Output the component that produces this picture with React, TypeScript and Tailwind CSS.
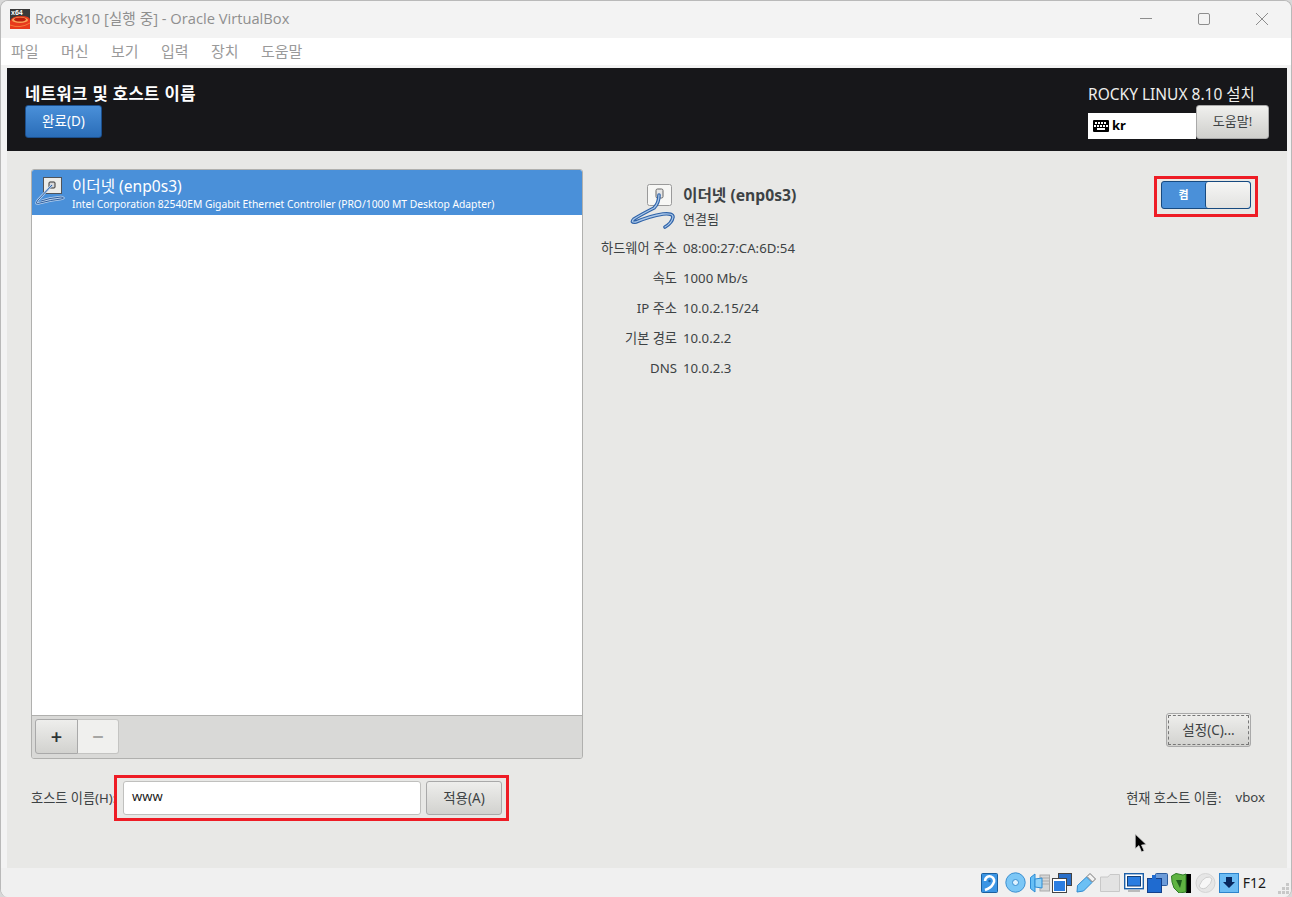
import React from "react";

const SANS = "font-['Noto_Sans','Noto_Sans_CJK_KR',sans-serif]";

function EthernetSmall() {
  const cable = "M17 8 L3 23 Q-1 28 5 26 Q16 23 26 22 Q31 21 26 20 Q14 21 6 24";
  return (
    <svg width="32" height="34" viewBox="0 0 32 34" className="shrink-0">
      <rect x="8.5" y="0.5" width="18" height="16" fill="#ecece9" stroke="#50545a" />
      <rect x="14" y="5" width="6" height="6" rx="1" fill="#d8d8d8" stroke="#333" />
      <path d={cable} fill="none" stroke="#b9d2ef" strokeWidth="2.4" />
      <path d={cable} fill="none" stroke="#2f5f9e" strokeWidth="1" />
    </svg>
  );
}

function EthernetLarge() {
  const cable = "M29 12 Q29 20 24 25 Q12 31 4 36 Q0 40 6 39 Q20 33 33 31 Q43 30 43 34 Q42 40 35 44";
  return (
    <svg width="48" height="46" viewBox="0 0 48 46" className="shrink-0">
      <rect x="17.5" y="1.5" width="24" height="21" rx="2" fill="#f7f7f5" stroke="#9a9a9a" />
      <rect x="26" y="6" width="7" height="9" rx="1.5" fill="#e6e6e6" stroke="#666" />
      <path d={cable} fill="none" stroke="#2f63a8" strokeWidth="3.6" strokeLinecap="round" />
      <path d={cable} fill="none" stroke="#a9c6e8" strokeWidth="1.3" strokeLinecap="round" />
    </svg>
  );
}

function AppIcon() {
  return (
    <div className="relative w-5 h-5 bg-[#3a3a3a] overflow-hidden shrink-0">
      <svg width="20" height="20" viewBox="0 0 20 20" className="absolute left-0 top-0">
        <path d="M0 12 Q2 7 11 7 Q20 7 20 11 L20 20 L0 20 Z" fill="#e8391c" />
        <ellipse cx="10" cy="11" rx="8" ry="3" fill="#f8a35a" />
        <ellipse cx="10" cy="10.5" rx="6" ry="2" fill="#b81d0c" />
        <path d="M0 16 Q10 20 20 14" fill="none" stroke="#f57a3a" />
      </svg>
      <span className="absolute left-[1px] top-0 text-[7px] leading-[8px] font-bold text-white font-['Liberation_Sans',sans-serif]">x64</span>
    </div>
  );
}

function Keyboard() {
  return (
    <svg width="16" height="12" viewBox="0 0 16 12" className="shrink-0">
      <rect width="16" height="12" rx="1" fill="#000" />
      {[2, 5, 8, 11].map((x) => (
        <rect key={x} x={x} y="2" width="2" height="2" fill="#fff" />
      ))}
      {[1, 4, 7, 10, 13].map((x) => (
        <rect key={x} x={x} y="5" width="2" height="2" fill="#fff" />
      ))}
      <rect x="4" y="8" width="8" height="2" fill="#fff" />
    </svg>
  );
}

function StatusIcons() {
  return (
    <div className="flex items-center gap-[4px]">
      {/* hard disk */}
      <svg width="17" height="20" viewBox="0 0 17 20"><rect x="0.5" y="0.5" width="16" height="19" rx="1" fill="#3b95e4" stroke="#1b5f9e" /><path d="M4 8 a4.6 4.6 0 1 1 8 3 Q10 15 4 17" fill="none" stroke="#fff" strokeWidth="2.6" /><circle cx="8.5" cy="8" r="1.2" fill="#1b5f9e" /></svg>
      {/* optical */}
      <svg width="21" height="21" viewBox="0 0 21 21" className="ml-[3px]"><circle cx="10.5" cy="10.5" r="9.7" fill="#7cc7f6" stroke="#3a8fd0" /><circle cx="10.5" cy="10.5" r="3" fill="#dff2ff" stroke="#3a8fd0" /></svg>
      {/* audio */}
      <svg width="20" height="20" viewBox="0 0 20 20"><rect x="10" y="2" width="9.5" height="16" fill="#d6d6d6" stroke="#aaa" /><path d="M10 5 h9 M10 8 h9 M10 11 h9" stroke="#aaa" /><path d="M0.5 4.5 L5 1 L5 19 L0.5 15.5 Z" fill="#66bff5" stroke="#2d8bd4" /><path d="M5 6 L12 5 L12 15 L5 14 Z" fill="#8fd2f8" stroke="#2d8bd4" /></svg>
      {/* network */}
      <svg width="20" height="20" viewBox="0 0 20 20" className="-ml-[2px]"><rect x="6.5" y="0.5" width="13" height="12" fill="#2a6fc9" stroke="#444" /><rect x="0.5" y="5.5" width="14" height="14" fill="#fff" stroke="#444" /><rect x="2" y="8" width="11" height="10" fill="#2a7de1" /></svg>
      {/* usb */}
      <svg width="20" height="20" viewBox="0 0 20 20"><path d="M1 19 L1.5 12.5 L10.5 4 L16 9.5 L7.5 18 Z" fill="#6cc0f4" stroke="#2f8ad0" /><path d="M11 3.5 L14 0.5 L19.5 6 L16.5 9 Z" fill="#f2f2f2" stroke="#777" /></svg>
      {/* folder */}
      <svg width="20" height="18" viewBox="0 0 20 18"><path d="M0.5 3 L8 3 L10 0.5 L19.5 0.5 L19.5 17.5 L0.5 17.5 Z" fill="#e3e3e3" stroke="#c8c8c8" /></svg>
      {/* display */}
      <svg width="20" height="20" viewBox="0 0 20 20"><rect x="0.7" y="0.7" width="18.6" height="15" fill="#fff" stroke="#1c5fa8" strokeWidth="1.4" /><rect x="3.5" y="3.5" width="13" height="9.5" fill="#2a7de1" stroke="#123f78" /><rect x="4" y="17" width="12" height="2" fill="#bbb" /></svg>
      {/* capture */}
      <svg width="21" height="20" viewBox="0 0 21 20" className="-ml-[1px]"><rect x="8.5" y="0.5" width="12" height="12" rx="1" fill="#6c9bd8" stroke="#2c5b9c" /><rect x="0.5" y="5.5" width="14" height="14" fill="#1f6bd0" stroke="#14408a" /><rect x="5" y="2" width="4" height="4" fill="#1f6bd0" /></svg>
      {/* guest additions */}
      <svg width="20" height="20" viewBox="0 0 20 20" className="-ml-[1px]"><rect x="15" y="1" width="5" height="19" fill="#000" /><path d="M0.5 3 L5 0.5 L12 2 L15 1 L15 19 L8 20 L3 15 L1 9 Z" fill="#5fb342" stroke="#2f7c27" /><path d="M5 7 L11 7 L9 15 Z" fill="#1e5c1c" /></svg>
      {/* mouse */}
      <svg width="21" height="20" viewBox="0 0 21 20"><circle cx="10.5" cy="10" r="9.5" fill="#e6e6e6" stroke="#d4d4d4" /><path d="M4 13 Q7 6 11 4.5 Q15 3 17 6 Q17 10 11 15 Q6 17 4 13 Z" fill="#f7f7f7" stroke="#cfcfcf" /></svg>
      {/* arrow */}
      <svg width="20" height="20" viewBox="0 0 20 20" className="-ml-[1px]"><rect x="0.5" y="0.5" width="19" height="19" fill="#6cbcf4" stroke="#2d84cc" /><path d="M7 4 L13 4 L13 9 L16 9 L10 15 L4 9 L7 9 Z" fill="#08285e" /></svg>
    </div>
  );
}

function Grip() {
  return (
    <div className="grid grid-cols-3 gap-[1px] w-[11px] h-[11px] self-end mb-[3px] ml-[12px]">
      <span /><span /><span className="bg-[#c8c8c8]" />
      <span /><span className="bg-[#c8c8c8]" /><span className="bg-[#c8c8c8]" />
      <span className="bg-[#c8c8c8]" /><span className="bg-[#c8c8c8]" /><span className="bg-[#c8c8c8]" />
    </div>
  );
}

const Detail = ({ label, value }: { label: string; value: string }) => (
  <>
    <span className="text-right">{label}</span>
    <span>{value}</span>
  </>
);

export default function App() {
  return (
    <div className="w-[1292px] h-[897px] bg-[#d8d8d8]">
      <div className={`relative w-full h-full flex flex-col overflow-hidden bg-[#f3f3f3] rounded-[8px] border-x border-t border-[#b9b9b9] ${SANS}`}>
        {/* title bar */}
        <div className="h-[37px] flex items-center pl-[9px] pb-[2px] shrink-0 bg-[#f3f3f3]">
          <AppIcon />
          <span className="ml-[5px] text-[14.7px] text-[#8f8f8f] font-['Open_Sans','Noto_Sans_CJK_KR',sans-serif] whitespace-nowrap">Rocky810 [실행 중] - Oracle VirtualBox</span>
          <div className="ml-auto flex items-center">
            <svg width="58" height="35" viewBox="0 0 58 35"><path d="M23 17.5 H35" stroke="#8d8d8d" /></svg>
            <svg width="58" height="35" viewBox="0 0 58 35"><rect x="23.5" y="12.5" width="11" height="11" rx="1.5" fill="none" stroke="#8d8d8d" /></svg>
            <svg width="58" height="35" viewBox="0 0 58 35"><path d="M23 12 L35 24 M35 12 L23 24" stroke="#8d8d8d" /></svg>
          </div>
        </div>
        {/* menu */}
        <div className="h-[27px] shrink-0 bg-white flex items-center pl-[10px] gap-[20px] text-[15px] text-[#9a9a9a]">
          {["파일", "머신", "보기", "입력", "장치", "도움말"].map((m) => (
            <span key={m} className="w-[30px] whitespace-nowrap">{m}</span>
          ))}
        </div>
        <div className="h-[3px] shrink-0" />

        {/* guest screen */}
        <div className="ml-[6px] mr-[4px] flex-1 flex flex-col min-h-0 bg-[#e8e8e6]">
          <header className="h-[83px] shrink-0 bg-[#17171a] flex justify-between pl-[18px] pr-[18px]">
            <div className="flex flex-col items-start">
              <h1 className="mt-[15px] text-[16.6px] leading-[21px] font-bold text-white tracking-[0.4px] whitespace-nowrap">네트워크 및 호스트 이름</h1>
              <button className="mt-[1px] w-[77px] h-[33px] rounded-[3px] border border-[#1c4f8c] bg-gradient-to-b from-[#4a90d9] to-[#2a6db8] text-[13.5px] text-white">완료(D)</button>
            </div>
            <div className="flex flex-col w-[181px]">
              <div className="mt-[15px] h-[22px] leading-[22px] text-[15.5px] text-[#eeeeec] whitespace-nowrap">ROCKY LINUX 8.10 설치</div>
              <div className="flex items-start">
                <div className="mt-[8px] w-[108px] h-[26px] bg-white flex items-center pl-[5px] gap-[3px]">
                  <Keyboard />
                  <span className="text-[13px] font-bold text-black">kr</span>
                </div>
                <button className="w-[73px] h-[34px] rounded-[3px] border border-[#a9a9a9] bg-gradient-to-b from-[#f0f0ee] to-[#cfcfcc] text-[13px] text-[#3d4244]">도움말!</button>
              </div>
            </div>
          </header>

          <main className="flex-1 flex flex-col pl-[24px] pt-[18px] text-[#3d4244]">
            <div className="flex h-[590px]">
              {/* device list */}
              <section className="w-[552px] flex flex-col border border-[#b0b0ae] rounded-[3px] overflow-hidden">
                <div className="flex-1 bg-white">
                  <div className="h-[45px] bg-[#4a90d9] flex items-start pl-[3px] pt-[7px] text-white">
                    <EthernetSmall />
                    <div className="ml-[5px]">
                      <div className="text-[15.6px] leading-[18px] whitespace-nowrap">이더넷 (enp0s3)</div>
                      <div className="text-[10.3px] leading-[18px] whitespace-nowrap">Intel Corporation 82540EM Gigabit Ethernet Controller (PRO/1000 MT Desktop Adapter)</div>
                    </div>
                  </div>
                </div>
                <div className="h-[43px] shrink-0 bg-[#d9d9d7] border-t border-[#b0b0ae] pt-[3px] pl-[3px]">
                  <div className="flex w-[84px] h-[35px]">
                    <button className="w-[43px] rounded-l-[3px] border border-[#a9a9a9] bg-gradient-to-b from-[#eeeeec] to-[#d2d2cf] text-[20px] leading-none font-semibold text-[#2e3436]">+</button>
                    <button className="w-[41px] rounded-r-[3px] border border-l-0 border-[#c4c4c2] bg-[#f0f0ee] text-[20px] leading-none font-semibold text-[#a6a6a4]">−</button>
                  </div>
                </div>
              </section>

              {/* device details */}
              <section className="flex-1 flex flex-col pl-[18px] pr-[29px]">
                <div className="flex items-start">
                  <div className="ml-[29px] mt-[14px]"><EthernetLarge /></div>
                  <div className="ml-[5px] mt-[15px]">
                    <div className="text-[15.7px] leading-[22px] font-bold whitespace-nowrap">이더넷 (enp0s3)</div>
                    <div className="mt-[3px] text-[13px] leading-[20px]">연결됨</div>
                  </div>
                  <div className="ml-auto mt-[7px] border-[3px] border-[#ee1c25] px-[4px] pt-[2px] pb-[5px]">
                    <div className="w-[90px] h-[28px] flex rounded-[3px] border border-[#174a80] overflow-hidden bg-[#4a90d9]">
                      <span className="w-[43px] text-white text-[11px] font-bold flex items-center justify-center">켬</span>
                      <span className="flex-1 rounded-[3px] border-l border-[#174a80] bg-gradient-to-b from-[#f6f6f5] to-[#e2e2e0]" />
                    </div>
                  </div>
                </div>
                <div className="mt-[9px] w-[200px] grid grid-cols-[76px_1fr] gap-x-[6px] text-[13.2px] leading-[20px] gap-y-[10px] whitespace-nowrap">
                  <Detail label="하드웨어 주소" value="08:00:27:CA:6D:54" />
                  <Detail label="속도" value="1000 Mb/s" />
                  <Detail label="IP 주소" value="10.0.2.15/24" />
                  <Detail label="기본 경로" value="10.0.2.2" />
                  <Detail label="DNS" value="10.0.2.3" />
                </div>
                <button className="mt-auto mb-[12px] ml-auto mr-[7px] w-[85px] h-[34px] rounded-[3px] border border-[#a9a9a9] bg-gradient-to-b from-[#efefed] to-[#d2d2cf] text-[13.5px] outline-1 outline-dashed -outline-offset-3 outline-[#777]">설정(C)...</button>
              </section>
            </div>

            {/* hostname */}
            <div className="mt-[16px] flex items-center text-[13.2px]">
              <span className="w-[83px] pt-[2px] whitespace-nowrap">호스트 이름(H):</span>
              <div className="flex items-center gap-[5px] border-[3px] border-[#ee1c25] pl-[6px] pr-[4px] py-[3px]">
                <div className="w-[298px] h-[34px] bg-white rounded-[3px] border border-[#c0c0be] flex items-center pl-[8px] pb-[2px] text-[13px] text-[#1a1a1a]">www</div>
                <button className="w-[76px] h-[34px] rounded-[3px] border border-[#a9a9a9] bg-gradient-to-b from-[#eeeeec] to-[#d2d2cf] text-[13.5px]">적용(A)</button>
              </div>
              <span className="ml-auto pt-[2px] whitespace-nowrap">현재 호스트 이름:</span>
              <span className="ml-[14px] mr-[22px]">vbox</span>
            </div>
          </main>
        </div>

        {/* status bar */}
        <div className="h-[29px] shrink-0 bg-[#f0f0f0] flex items-center justify-end pr-[2px]">
          <StatusIcons />
          <span className="ml-[4px] text-[14px] text-[#1a1a1a]">F12</span>
          <Grip />
        </div>

        {/* mouse pointer */}
        <svg width="14" height="21" viewBox="0 0 13 20" className="absolute left-[1133px] top-[832px]">
          <path d="M1 1 L1 15 L4.5 12 L7 18 L9.5 17 L7 11.5 L11.5 11 Z" fill="#000" stroke="#ddd" strokeWidth="0.7" />
        </svg>
      </div>
    </div>
  );
}
